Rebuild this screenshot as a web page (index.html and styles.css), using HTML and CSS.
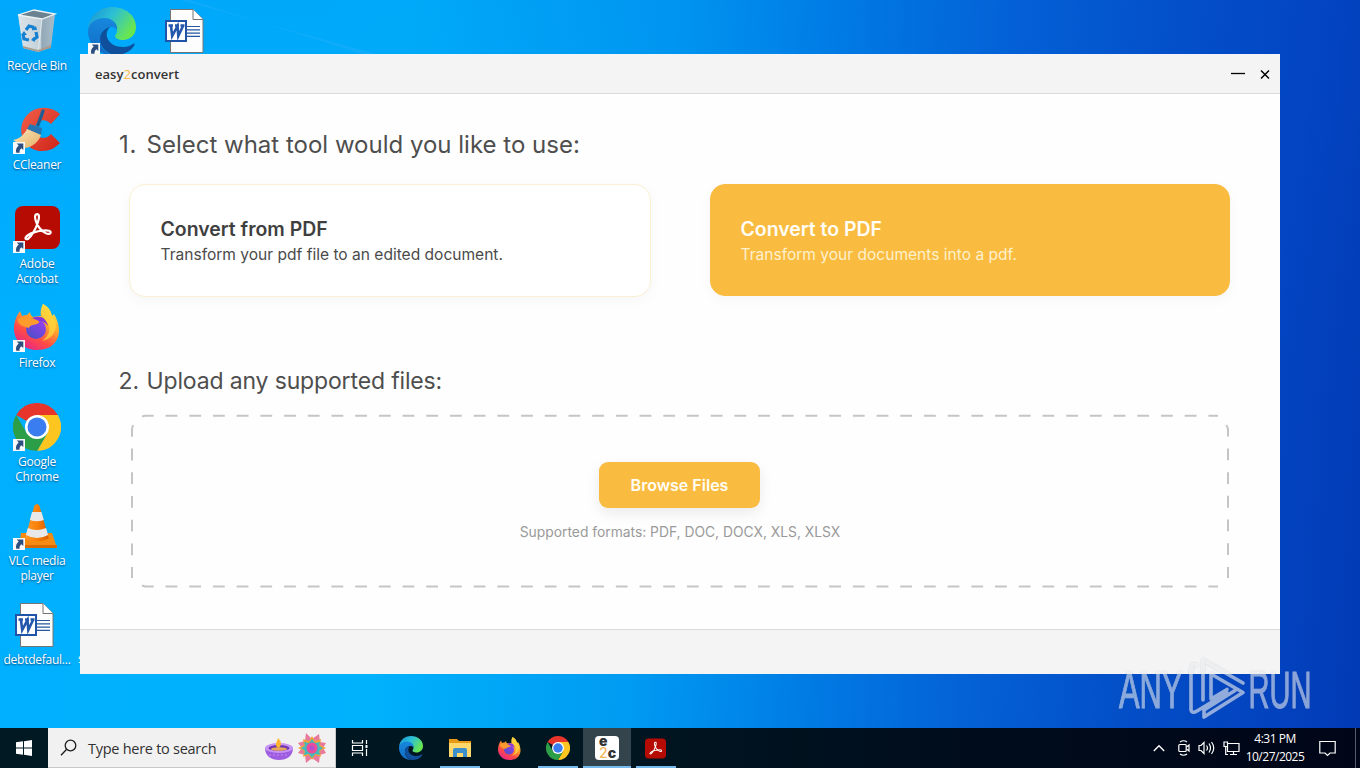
FILE: index.html
```html
<!DOCTYPE html>
<html lang="en">
<head>
<meta charset="utf-8">
<title>easy2convert</title>
<link rel="stylesheet" href="styles.css">
</head>
<body>
<svg class="defs" width="0" height="0" aria-hidden="true">
  <defs>
    <linearGradient id="edgeA" x1="0" y1="0" x2="1" y2=".5"><stop offset="0" stop-color="#168fd8"/><stop offset=".5" stop-color="#2cc0d5"/><stop offset="1" stop-color="#68e652"/></linearGradient>
    <linearGradient id="edgeB" x1="0" y1="0" x2="0" y2="1"><stop offset="0" stop-color="#1688dd"/><stop offset="1" stop-color="#126bc4"/></linearGradient>
    <linearGradient id="fox" x1=".85" y1="0" x2=".25" y2="1"><stop offset="0" stop-color="#fff14a"/><stop offset=".4" stop-color="#ffa42b"/><stop offset=".7" stop-color="#ff4b46"/><stop offset="1" stop-color="#e5238c"/></linearGradient>
    <linearGradient id="globe" x1=".8" y1="0" x2=".2" y2="1"><stop offset="0" stop-color="#9a3df0"/><stop offset="1" stop-color="#4b50c8"/></linearGradient>
    <linearGradient id="cone" x1="0" y1="0" x2="1" y2="0"><stop offset="0" stop-color="#ff9a2e"/><stop offset=".5" stop-color="#f98108"/><stop offset="1" stop-color="#d95f00"/></linearGradient>
    <linearGradient id="bin" x1="0" y1="0" x2="1" y2="0"><stop offset="0" stop-color="#dce4e9"/><stop offset=".62" stop-color="#c3d0d8"/><stop offset=".64" stop-color="#93a9b8"/><stop offset="1" stop-color="#a9bcc8"/></linearGradient>
    <linearGradient id="red" x1="0" y1="0" x2="1" y2="1"><stop offset="0" stop-color="#f2604a"/><stop offset="1" stop-color="#cf2418"/></linearGradient>
    <linearGradient id="bristle" x1="0" y1="0" x2="1" y2="1"><stop offset="0" stop-color="#fbe6bd"/><stop offset="1" stop-color="#e5b066"/></linearGradient>

    <symbol id="i-shortcut" viewBox="0 0 12 12">
      <rect width="12" height="12" fill="#f7f9fb"/>
      <path d="M3.800 1.500H10.300V8L8.300 6.200C6.900 7.300 6.300 8.800 6.600 10.800H3.200C2.500 7.800 3.600 5.200 5.700 3.600Z" fill="#2c4f80"/>
    </symbol>
    <symbol id="i-edge" viewBox="0 0 48 48">
      <path d="M0 22C1 9 11 0 24 0c14 0 24 9 24 20 0 8-6 13-13 13-5 0-8-2-8-4 0-1 2-2 2-6 0-5-5-9-11-9C8 14 1 18 0 22Z" fill="url(#edgeA)"/>
      <path d="M0 24c0-8 8-13 16-13 9 0 14 6 13 12-1-2-4-3-6-3-7 0-11 5-11 12 0 8 6 15 14 16C12 49 0 38 0 24Z" fill="url(#edgeB)"/>
      <path d="M12 32c0-6 4-11 10-12-3 3-4 6-3 10 2 7 9 10 16 10 5 0 8-2 10-3 2-1 2 0 1 2-4 6-11 9-19 9-8-1-15-8-15-16Z" fill="#104f9c"/>
    </symbol>
    <symbol id="i-firefox" viewBox="0 0 46 46">
      <path d="M29 0c7 4 8 8 9 12l2-2c5 8 6 17 4 23-3 9-11 13-21 13C9 46 0 36 0 25 0 17 3 11 6 7l2 5c2-1 4-1 5-1l3-3c0 3 2 4 3 5 4-1 6-1 8-1-1-4 0-8 2-12Z" fill="url(#fox)"/>
      <circle cx="22" cy="25" r="10" fill="url(#globe)"/>
      <path d="M4 15c5-4 11-2 18 0 4 1 4 4 1 5-4 1-7 1-8 4-4-1-12-3-11-9Z" fill="#ff9a2c"/>
      <path d="M18 14c8-3 14-1 16 8-3-4-6-5-9-5Z" fill="#8336dc"/>
      <path d="M29 0c-4 9 0 13 4 18 5 8 1 15-5 19 9-2 14-8 14-16 0-5-2-8-4-9-1-4-2-8-9-12Z" fill="#ffd43c" opacity=".8"/>
    </symbol>
    <symbol id="i-chrome" viewBox="0 0 48 48">
      <path d="M24 24 3.200 12A24 24 0 0 1 44.800 12Z" fill="#e8352c"/>
      <path d="M24 12H44.800A24 24 0 0 1 24 48L34.400 30Z" fill="#fdc51f"/>
      <path d="M3.200 12 13.600 30 24 36 34.400 30 24 48A24 24 0 0 1 3.200 12Z" fill="#2c9e48"/>
      <circle cx="24" cy="24" r="12" fill="#fff"/><circle cx="24" cy="24" r="9.500" fill="#3a7df0"/>
    </symbol>
    <symbol id="i-acrobat" viewBox="0 0 45 43">
      <rect width="45" height="43" rx="8" fill="#b50b02"/>
      <path d="M21 8.500c3-1.500 4 2 2 7.500-2 7-6.500 14-9.500 16.500-2 1.500-4 .5-2.500-1.500 2.500-3.500 11-6 17-6.500 5-.5 8.500.5 7.500 2.500-2 2.500-7.500-.5-11-5-4-5-5.500-12-3.500-13.500Z" fill="none" stroke="#fff" stroke-width="2.200"/>
    </symbol>
    <symbol id="i-word" viewBox="0 0 39 44">
      <path d="M5.500.5H28l10 10v33H5.500Z" fill="#fdfdfd" stroke="#747474"/>
      <path d="M28 .5V10.500H38" fill="#fff" stroke="#747474"/>
      <path d="M22 17.500H35M22 20.800H35M22 24.100H35M22 27.400H35" stroke="#25579f" stroke-width="1.200"/>
      <rect x="1" y="12" width="20" height="20" fill="#fff" stroke="#2054a8" stroke-width="2"/>
      <path d="M3.500 16.500h4.500M10 16.500h4M15.500 16.500h4M6 17l1.200 10L12.500 17l.8 10L18 17" fill="none" stroke="#2358ac" stroke-width="2.600"/>
    </symbol>
  </defs>
</svg>

<main class="desktop">
  <section class="icons">
    <div class="col">
      <div class="item"><div class="art">
        <svg width="48" height="48"><path d="M5 8 21 3 42 7 38 40 25 45 10 41Z" fill="url(#bin)"/><path d="M5 8 21 3 42 7 29 12Z" fill="#6b8290" stroke="#edf2f4" stroke-width="1.300"/><path d="M29 12 25 45" stroke="#e3eaee"/><path d="m10 39 15 4 13-5v3l-13 4-15-4Z" fill="#a89c8f"/><g fill="none" stroke="#1680d0" stroke-width="3.200"><path d="m13 23 3-4 4 1 1 3M23 25l1 5-4 3M16 33l-5-1-1-5"/></g><path d="m19 23 5 0-1-4ZM21 30l-3 3 4 2ZM8 28l3-4 3 4Z" fill="#1680d0"/></svg>
      </div><div class="label">Recycle Bin</div></div>
      <div class="item"><div class="art">
        <svg width="48" height="48"><path d="M47 8C35-3 14 1 9 18c-4 15 7 27 20 27 8 0 13-3 18-8l-9-9c-6 7-16 4-16-5s10-12 16-5Z" fill="url(#red)"/><path d="M30 5 25 19" stroke="#1f5e93" stroke-width="3.400" stroke-linecap="round"/><path d="m17 18 12 4-1 7-14-6Z" fill="#2676b3"/><path d="m14 23 14 6c-2 6-8 12-16 13L0 34c6-1 11-5 14-11Z" fill="url(#bristle)"/></svg>
        <svg class="shortcut" width="12" height="12"><use href="#i-shortcut"/></svg>
      </div><div class="label">CCleaner</div></div>
      <div class="item"><div class="art">
        <svg class="acro" width="45" height="43"><use href="#i-acrobat"/></svg>
        <svg class="shortcut" width="12" height="12"><use href="#i-shortcut"/></svg>
      </div><div class="label">Adobe<br>Acrobat</div></div>
      <div class="item"><div class="art">
        <svg width="46" height="46"><use href="#i-firefox"/></svg>
        <svg class="shortcut" width="12" height="12"><use href="#i-shortcut"/></svg>
      </div><div class="label">Firefox</div></div>
      <div class="item"><div class="art">
        <svg width="48" height="48"><use href="#i-chrome"/></svg>
        <svg class="shortcut" width="12" height="12"><use href="#i-shortcut"/></svg>
      </div><div class="label">Google<br>Chrome</div></div>
      <div class="item"><div class="art">
        <svg width="48" height="48"><path d="M8 31h31l5 15H6Z" fill="#f58b12"/><path d="M6 43h38v3H6Z" fill="#d86a04"/><path d="M21 4q3-4 6 0l11 34q-14 6-28 0Z" transform="translate(3.500 0) scale(.85 .96)" fill="url(#cone)"/><path d="m19 10 9.500 0 2.300 8q-6.800 2.500-14 0ZM14.800 26q9 4 18.300 0l2 7q-11 6-22.200 0Z" fill="#e8e8e8"/></svg>
        <svg class="shortcut" width="12" height="12"><use href="#i-shortcut"/></svg>
      </div><div class="label">VLC media<br>player</div></div>
      <div class="item"><div class="art word">
        <svg width="39" height="44"><use href="#i-word"/></svg>
      </div><div class="label">debtdefaul...</div></div>
    </div>
    <div class="col second">
      <div class="item"><div class="art">
        <svg width="48" height="48"><use href="#i-edge"/></svg>
        <svg class="shortcut" width="12" height="12"><use href="#i-shortcut"/></svg>
      </div></div>
    </div>
    <div class="col third">
      <div class="item"><div class="art word"><svg width="39" height="44"><use href="#i-word"/></svg></div></div>
    </div>
  </section>
  <svg class="ray" width="400" height="60"><path d="M180 0 380 55H365L190 0Z" fill="#36b5ff" opacity=".25"/></svg>
  <span class="peek">s</span>

  <section class="window">
    <header class="titlebar">
      <div class="brand">easy<span>2</span>convert</div>
      <svg class="controls" width="42" height="12"><path d="M1 5.500H15" stroke="#000" stroke-width="1.300"/><path d="m31 2.500 8 8m0-8-8 8" stroke="#000" stroke-width="1.500"/></svg>
    </header>
    <div class="content">
      <h1 class="step step-one"><span>1.</span>Select what tool would you like to use:</h1>
      <div class="tools">
        <article class="tool"><h2>Convert from PDF</h2><p class="from">Transform your pdf file to an edited document.</p></article>
        <article class="tool active"><h2>Convert to PDF</h2><p class="to">Transform your documents into a pdf.</p></article>
      </div>
      <h1 class="step step-two"><span>2.</span>Upload any supported files:</h1>
      <div class="drop">
        <svg class="dashes" width="1098" height="174"><g fill="none" stroke="#c5c5c5" stroke-width="2">
          <path d="M11 2.500 14 1.700H1087" stroke-dasharray="11.800 11.900"/>
          <path d="M11 171.500 14 172.500H1087" stroke-dasharray="11.800 11.900"/>
          <path d="M2 11 1 15V164" stroke-dasharray="11.800 11.900"/>
          <path d="M1095.500 11 1097 15V164" stroke-dasharray="11.800 11.900"/>
        </g></svg>
        <button class="browse">Browse Files</button>
        <p class="formats">Supported formats: PDF, DOC, DOCX, XLS, XLSX</p>
      </div>
    </div>
    <footer class="statusbar"></footer>
  </section>

  <svg class="watermark" width="225" height="74">
    <g fill="#fff" stroke="#fff" stroke-width="1" opacity=".52" font-family="Liberation Sans, sans-serif" font-size="51">
      <text transform="translate(4 54) scale(.605 1)">ANY</text>
      <text transform="translate(133.500 54) scale(.57 1)">RUN</text>
    </g>
    <g fill="none" stroke="#fff" stroke-width="3.600" stroke-linejoin="round" stroke-linecap="round" opacity=".55">
      <path d="M88 46V6L128 29M96 20V45L112 35.500M96 20 128 38.500 89 63V56L120 36.500M81 11C77 9 76 14 76 19V56Q77 60 82 57L112 39"/>
    </g>
  </svg>
</main>

<nav class="taskbar">
  <div class="start"><svg width="16" height="16" fill="#fff"><path d="M0 2.300 7 1.300V7.500H0ZM8 1.200 16 0V7.500H8ZM0 8.500H7V14.700L0 13.700ZM8 8.500H16V16L8 14.800Z"/></svg></div>
  <div class="search">
    <svg width="18" height="18" fill="none" stroke="#1c1c1c" stroke-width="1.300"><circle cx="11.500" cy="6.500" r="5.300"/><path d="m7.700 10.300-5.700 6"/></svg>
    <span class="hint">Type here to search</span>
    <svg class="festive" width="64" height="32">
      <path d="M2 16c0 8 6 12 14 12s14-4 14-12Z" fill="#9e5de0"/><ellipse cx="16" cy="16" rx="14" ry="5" fill="#c794f3"/><ellipse cx="16" cy="16" rx="10.500" ry="3" fill="#6f37ae"/><ellipse cx="16" cy="17" rx="8" ry="1.800" fill="#e7a85d"/><path d="M15 16c-4-3-1-6 0-10 4 4 4 8 0 10Z" fill="#ffb52e"/><path d="M6 23h20" stroke="#c38df2" stroke-dasharray="2 2"/>
      <path d="m43 1 6 6 7-5 1 8 6 1-3 5 3 5-6 2-1 8-7-5-6 5-1-8-7-2 4-5-4-5 7-2Z" fill="#e8799c"/><path d="m49 4 3 5 6-2-1 6 6 3-6 3 1 6-6-2-3 5-3-5-6 2 1-6-6-3 6-3-1-6 6 2Z" fill="#f5a23b"/><path d="m49 7 3 4 5-1-1 4 4 2-4 3 1 4-5-1-3 4-3-4-5 1 1-4-4-3 4-2-1-4 5 1Z" fill="#41b9bd"/><circle cx="49" cy="16" r="5.500" fill="#ec4d99"/><circle cx="49" cy="16" r="2.500" fill="#b54dd0"/>
    </svg>
  </div>
  <div class="task view"><svg width="18" height="16" fill="none" stroke="#fff" stroke-width="1.200"><path d="M1.500 0V3H11.500V0M1.500 16V13H11.500V16M1.500 5.500H11.500V10.500H1.500ZM15.500 0V4M15.500 9V16"/><rect x="14.500" y="5" width="2" height="3" fill="#fff" stroke="none"/></svg></div>
  <div class="apps">
    <div class="task"><svg width="24" height="24"><use href="#i-edge"/></svg></div>
    <div class="task open"><svg width="22" height="20"><path d="M0 1H8L10 3H22V8H0Z" fill="#e69a16"/><path d="M0 5H22V19H0Z" fill="#ffd76a"/><path d="M4 19V12Q4 10 6 10H16Q18 10 18 12V19H14V15H8V19Z" fill="#3b8fcb"/></svg></div>
    <div class="task"><svg width="23" height="23"><use href="#i-firefox"/></svg></div>
    <div class="task open"><svg width="24" height="24"><use href="#i-chrome"/></svg></div>
    <div class="task open current"><div class="e2c"><b class="e">e</b><div class="pair"><span class="two">2</span><b>c</b></div></div></div>
    <div class="task open last"><svg width="21" height="21"><use href="#i-acrobat"/></svg></div>
  </div>
  <div class="tray">
    <svg width="12" height="8" fill="none" stroke="#fff" stroke-width="1.400"><path d="m.8 7 5.200-5.200L11.200 7"/></svg>
    <svg width="12" height="16" fill="none" stroke="#fff" stroke-width="1.200"><path d="M2 2Q5.500-.5 9 2M2 14Q5.500 16.500 9 14"/><rect x=".8" y="4.500" width="7.400" height="7" rx="1"/><path d="m8.500 7 2.500-2v6l-2.500-2"/></svg>
    <svg width="17" height="16" fill="none" stroke="#fff" stroke-width="1.200"><path d="M1 5.500H3L6 2.500V13.500L3 10.500H1ZM8.500 5.500Q10.500 8 8.500 10.500M11 3.500Q14 8 11 12.500M13.500 2Q18 8 13.500 14"/></svg>
    <svg width="17" height="15" fill="none" stroke="#fff" stroke-width="1.200"><path d="M5 2.500H16V10.500H4.500V6M7 13.500H14M10.500 10.500V13.500M1 1H4.500V5.500H1ZM2.700 5.500V13.500H5"/></svg>
  </div>
  <div class="clock"><span class="time">4:31 PM</span><span class="date">10/27/2025</span></div>
  <div class="notice"><svg width="17" height="17" fill="none" stroke="#fff" stroke-width="1.200"><path d="M.8 1.500H16.200V13H11L8.500 15.500 6 13H.8Z"/></svg></div>
</nav>
</body>
</html>
```
FILE: styles.css
```css
* { box-sizing: border-box; }
html, body { margin: 0; height: 768px; overflow: hidden; }
body { display: flex; flex-direction: column; width: 1360px; font-family: Inter, "Liberation Sans", sans-serif; }
svg { display: block; flex: none; }
p, h1, h2 { margin: 0; white-space: nowrap; }
.defs { position: absolute; }

.desktop {
  position: relative; height: 728px; flex: none; overflow: hidden;
  background:
    linear-gradient(180deg, rgba(0,90,220,.1), rgba(0,90,220,0) 50%),
    linear-gradient(94deg, #00b0ff 0, #00b2fc 29%, #009bf2 48%, #007de5 60%, #0461d6 72%, #034fc8 83%, #0343c0 93%, #023ab5 100%);
}
.icons { display: flex; }
.col { width: 74px; padding-top: 7px; display: flex; flex-direction: column; }
.item { height: 99px; display: flex; flex-direction: column; align-items: center; }
.art { position: relative; width: 48px; height: 48px; display: flex; justify-content: center; }
.acro { margin-top: 1px; }
.word { padding-top: 2px; justify-content: flex-start; padding-left: 2px; }
.third .word { margin-left: 4px; }
.second .item { padding-left: 2px; }
.label { margin-top: 3px; font: 12px/15px "Open Sans", sans-serif; letter-spacing: -.25px; color: #fff; text-align: center; text-shadow: 0 1px 2px rgba(0,40,90,.75); white-space: nowrap; }
.shortcut { position: absolute; left: 0; bottom: 0; }
.ray { position: absolute; left: 0; top: 0; }
.peek { position: absolute; left: 78px; top: 651px; font: 12px/15px "Open Sans", sans-serif; color: #fff; }

.window { position: absolute; left: 80px; top: 54px; width: 1200px; height: 620px; background: #fefefe; display: flex; flex-direction: column; }
.titlebar { height: 40px; background: #f4f4f4; border-bottom: 1px solid #d9d9d9; display: flex; align-items: center; justify-content: space-between; padding: 0 8px 0 15px; }
.brand { font: 600 13px/20px "Open Sans", sans-serif; letter-spacing: .04px; color: #333; }
.brand span { color: #f8b94e; font-weight: 400; }
.content { flex: 1; padding: 36px 50px 0 39px; }
.step { font-size: 24px; line-height: 30px; font-weight: 400; color: #4e4e4e; }
.step span { display: inline-block; width: 27.500px; letter-spacing: .8px; }
.tools { display: flex; gap: 59px; margin: 24px 0 0 10px; }
.tool { width: 522px; height: 113px; border: 1px solid #fbefd2; border-radius: 16px; background: #fff; padding: 31px 0 0 30.500px; box-shadow: 0 4px 14px rgba(0,0,0,.035); }
.tool.active { width: 520px; height: 111.500px; background: #f9bc40; border-color: #f9bc40; padding: 31px 0 0 29.500px; border-radius: 15px; }
.tool h2 { font-size: 19.450px; line-height: 26px; font-weight: 600; color: #3f3f3f; }
.tool p { font-size: 15.550px; line-height: 25px; color: #4b4b4b; }
.tool.active h2 { color: #fffdf6; }
.tool.active p { color: #fff0cc; }
.step-two { margin-top: 69px; font-size: 23px; letter-spacing: -.15px; }
.step-two span { letter-spacing: 0; margin-left: -.5px; width: 28px; }
.drop { position: relative; width: 1098px; height: 173px; margin: 18px 0 0 12px; display: flex; flex-direction: column; align-items: center; padding-top: 47.500px; }
.dashes { position: absolute; left: 0; top: -.5px; }
.browse { position: relative; left: -.5px; width: 161px; height: 46px; border: 0; border-radius: 9px; background: #f9bc40; color: #fffdf6; font: 600 16px/20px Inter, sans-serif; box-shadow: 0 5px 14px rgba(0,0,0,.08); white-space: nowrap; }
.formats { margin-top: 14px; font-size: 13.830px; line-height: 20px; color: #9a9a9a; }
.statusbar { height: 45px; background: #f4f4f4; border-top: 1px solid #d9d9d9; }
.watermark { position: absolute; left: 1115px; top: 654px; filter: drop-shadow(0 0 1px rgba(70,80,100,.35)); }

.taskbar { height: 40px; flex: none; display: flex; background: linear-gradient(90deg, #001923 0, #001621 45%, #000b1b 75%, #000617 100%); color: #fff; }
.start, .task { width: 48px; height: 40px; display: flex; align-items: center; justify-content: center; }
.search { width: 288px; background: #f1f1f1; border: 1px solid #c8c8c8; border-width: 0 1px 1px 0; display: flex; align-items: center; padding-left: 11px; }
.hint { margin: 2px 0 0 11px; font: 14.500px/20px "Open Sans", sans-serif; letter-spacing: -.27px; color: #323232; white-space: nowrap; width: 129px; }
.festive { margin-left: 46px; }
.apps { display: flex; gap: 1px; margin-left: 3px; }
.task { position: relative; }
.open::after { content: ""; position: absolute; left: 4px; right: 4px; bottom: 0; height: 2px; background: #76b9ed; }
.current { background: #33444d; }
.current::after { left: 0; right: 0; }
.last svg { margin-right: 2px; }
.e2c { width: 24px; height: 24px; padding: 0 3px 0 4px; border-radius: 4px; background: #fff; color: #333; font: 700 14px/12px Inter, sans-serif; display: flex; flex-direction: column; }
.e { height: 12px; line-height: 9px; }
.pair { display: flex; justify-content: space-between; height: 12px; line-height: 10px; font-size: 14px; }
.two { color: #f5b65a; font-weight: 500; }
.tray { display: flex; align-items: center; gap: 9px; margin-left: 473px; width: 87px; }
.tray svg:nth-child(2) { margin-left: 4px; }
.tray svg:nth-child(3) { margin-left: -1px; }
.tray svg:nth-child(4) { margin-left: -1px; }
.clock { width: 66px; margin-left: 2px; display: flex; flex-direction: column; align-items: center; font: 12px/18px "Open Sans", sans-serif; letter-spacing: -.5px; padding-top: 2px; white-space: nowrap; }
.notice { width: 48px; height: 40px; border-right: 1px solid #555f6b; display: flex; align-items: center; padding-left: 11px; }
```
